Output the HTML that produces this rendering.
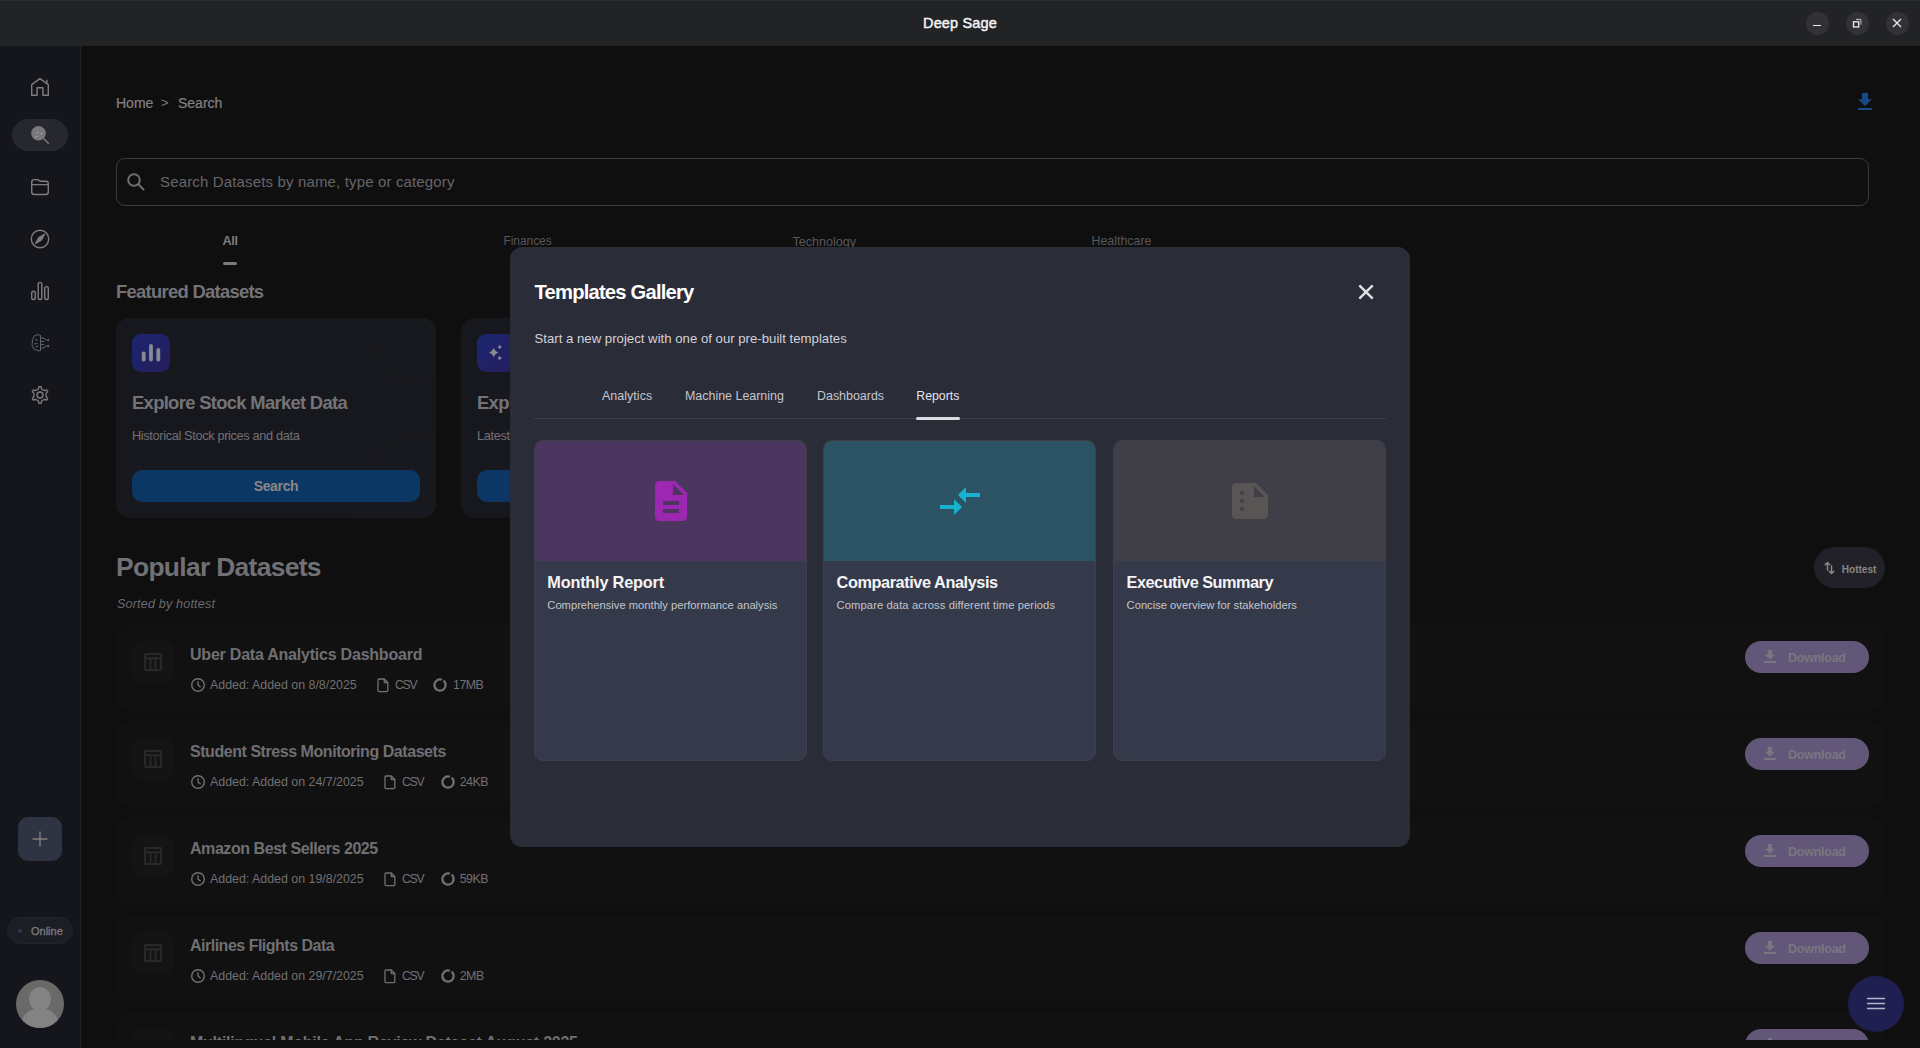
<!DOCTYPE html>
<html><head><meta charset="utf-8">
<style>
*{box-sizing:border-box;margin:0;padding:0}
html,body{width:1920px;height:1048px;overflow:hidden;background:#0f0f10;font-family:"Liberation Sans",sans-serif}
.a{position:absolute}
.t{position:absolute;white-space:nowrap;line-height:1.117}
svg{position:absolute;overflow:visible}
</style></head><body>
<!-- title bar -->
<div class="a" style="left:0;top:0;width:1920px;height:46px;background:#222324"></div>
<div class="a" style="left:0;top:0;width:1920px;height:1px;background:#2c2d38"></div>
<div class="t" style="left:0;width:1920px;text-align:center;top:14.9px;font-size:14.5px;font-weight:400;-webkit-text-stroke:0.45px #f4f4f6;letter-spacing:0.15px;color:#f4f4f6">Deep Sage</div>
<div class="a" style="left:1805.5px;top:11.5px;width:23.5px;height:23.5px;border-radius:50%;background:#313237"></div>
<div class="a" style="left:1845.5px;top:11.5px;width:23.5px;height:23.5px;border-radius:50%;background:#313237"></div>
<div class="a" style="left:1885.5px;top:11.5px;width:23.5px;height:23.5px;border-radius:50%;background:#313237"></div>
<div class="a" style="left:1813px;top:24.8px;width:8.2px;height:1.4px;background:#ececee"></div>
<svg style="left:1851px;top:17px" width="12" height="12" viewBox="0 0 12 12"><rect x="2.5" y="4.8" width="5.2" height="5.2" fill="none" stroke="#ececee" stroke-width="1.3"/><path d="M5 2.4H9.9V7.6" fill="none" stroke="#c8c8cc" stroke-width="1"/></svg>
<svg style="left:1891px;top:17px" width="12" height="12" viewBox="0 0 12 12"><path d="M2 2L10 10M10 2L2 10" stroke="#ececee" stroke-width="1.3"/></svg>

<!-- sidebar -->
<div class="a" style="left:0;top:46px;width:80px;height:1002px;background:#15161b"></div>
<div class="a" style="left:80px;top:46px;width:1px;height:1002px;background:#212322"></div>
<div class="a" style="left:12px;top:119px;width:56px;height:32px;border-radius:16px;background:#27282f"></div>
<div class="a" style="left:25px;top:817px;width:44px;height:44px;border-radius:10px;background:#2f3443;left:18px"></div>
<div class="a" style="left:7px;top:917px;width:66px;height:27px;border-radius:13.5px;background:#1d1e24;border:1px solid #24252b"></div>
<div class="t" style="left:31px;top:925px;font-size:11px;-webkit-text-stroke:0.3px #7d7a7e;color:#7d7a7e">Online</div>
<div class="a" style="left:16px;top:980px;width:48px;height:48px;border-radius:50%;background:#6b6868;overflow:hidden">
 <div class="a" style="left:13px;top:7px;width:22px;height:24px;border-radius:50%;background:#848384"></div>
 <div class="a" style="left:6px;top:28px;width:36px;height:30px;border-radius:50% 50% 0 0;background:#848384"></div>
</div>
<svg style="left:0;top:0" width="80" height="1048" viewBox="0 0 80 1048" fill="none" stroke="#807c7e" stroke-width="1.4" stroke-linejoin="round" stroke-linecap="round">
 <path d="M31.7 95.3V84.6L40 78.6L48.3 84.6V95.3H42.9V87.7H37.1V95.3Z"/>
 <path d="M46.8 80.2V83.3"/>
 <circle cx="38.5" cy="133.3" r="7.3" fill="#7a7a7c" stroke="none"/>
 <path d="M44.2 139L48.3 143.2" stroke="#7a7a7c" stroke-width="1.6"/>
 <circle cx="37.4" cy="132.5" r="0.6" fill="#cfcfcf" stroke="none"/><circle cx="41.4" cy="133.5" r="0.6" fill="#cfcfcf" stroke="none"/><circle cx="36.4" cy="136.5" r="0.6" fill="#cfcfcf" stroke="none"/>
 <path d="M31.7 183.5V182.2Q31.7 179.6 34.3 179.6H37.8L40 181.2H46Q48.3 181.2 48.3 183.4V192Q48.3 194.5 45.8 194.5H34.3Q31.7 194.5 31.7 192Z"/>
 <path d="M31.7 184.6H48.3"/>
 <circle cx="40" cy="239" r="8.7"/>
 <path d="M44.8 234.2L41.4 240.4L35.2 243.8L38.6 237.6Z" fill="#807c7e" stroke-width="1"/>
 <rect x="31.7" y="291.3" width="3.6" height="8.2" rx="1.8"/>
 <rect x="38.2" y="282.4" width="3.6" height="17.1" rx="1.8"/>
 <rect x="44.7" y="286.6" width="3.6" height="12.9" rx="1.8"/>
 <path d="M40 395m-3 0a3 3 0 1 0 6 0a3 3 0 1 0 -6 0"/>
 <path d="M37.05 389.89L38.63 388.54L38.83 386.68L41.17 386.68L41.37 388.54L42.95 389.89L44.90 390.58L46.62 389.83L47.79 391.85L46.28 392.96L45.90 395.00L46.28 397.04L47.79 398.15L46.62 400.17L44.90 399.42L42.95 400.11L41.37 401.46L41.17 403.32L38.83 403.32L38.63 401.46L37.05 400.11L35.10 399.42L33.38 400.17L32.21 398.15L33.72 397.04L34.10 395.00L33.72 392.96L32.21 391.85L33.38 389.83L35.10 390.58Z" stroke-width="1.3"/>
 <g stroke="#5f6170" stroke-width="1">
  <path d="M40.5 335.5V350.5M40.5 335.5Q38 333.8 36 335.2Q33.5 335.5 33.4 338Q31.6 339.5 32.5 342Q31.2 344.5 32.8 346.5Q33 349.5 35.8 350Q38 351.6 40.5 350.5"/>
  <path d="M35.5 339.5L37.5 340.5M34.5 344L37 343.5M36 347L38 346"/>
  <path d="M41 338H44L45.5 340H47M41 341.5H43.8M41 344.5H43.8M41 348H44L45.5 346H47"/><circle cx="48.2" cy="340" r="0.9" fill="#7a7680" stroke="none"/><circle cx="48.2" cy="346" r="0.9" fill="#7a7680" stroke="none"/>
 </g>
 <path d="M40 832V846M33 839H47" stroke="#85807e" stroke-width="1.3"/>
 <circle cx="20" cy="931" r="2" fill="#33365a" stroke="none"/>
</svg>

<!-- main -->
<div id="main"><div class="t" style="left:116px;top:96.3px;font-size:14px;-webkit-text-stroke:0.2px #858286;color:#858286">Home</div>
<div class="t" style="left:161px;top:96.3px;font-size:13px;color:#7a7a86">&gt;</div>
<div class="t" style="left:178px;top:96.3px;font-size:14px;-webkit-text-stroke:0.2px #858286;color:#858286">Search</div>
<svg style="left:1858px;top:93px" width="14" height="17" viewBox="0 0 14 17"><path d="M4 0H10V6.3H14L7 13L0 6.3H4Z" fill="#174a84"/><rect x="0" y="15" width="14" height="2" fill="#174a84"/></svg>
<div class="a" style="left:116px;top:158px;width:1753px;height:48px;border-radius:9px;border:1px solid #3a3a44"></div>
<svg style="left:126px;top:172px" width="20" height="20" viewBox="0 0 20 20" fill="none" stroke="#6f6d70" stroke-width="2"><circle cx="8" cy="8" r="5.8"/><path d="M12.3 12.3L17.5 17.5" stroke-linecap="round"/></svg>
<div class="t" style="left:160px;top:173.6px;font-size:15px;letter-spacing:0.15px;color:#67656a">Search Datasets by name, type or category</div>
<div class="t" style="left:222.4px;top:233.8px;font-size:12.6px;font-weight:700;letter-spacing:-0.3px;color:#7e7d81">All</div>
<div class="a" style="left:222.5px;top:262px;width:14.5px;height:3px;border-radius:1.5px;background:#7b7a7e"></div>
<div class="t" style="left:503.4px;top:234.6px;font-size:11.9px;color:#58575c">Finances</div>
<div class="t" style="left:792.4px;top:234.6px;font-size:12.6px;color:#58575c">Technology</div>
<div class="t" style="left:1091.5px;top:234.6px;font-size:12.4px;color:#58575c">Healthcare</div>
<div class="t" style="left:116px;top:281.6px;font-size:18.4px;font-weight:700;letter-spacing:-0.71px;color:#747377">Featured Datasets</div>
<div class="a" style="left:116px;top:318px;width:320px;height:200px;border-radius:14px;background:#17181d;overflow:hidden"><div class="a" style="left:259px;top:-18px;width:80px;height:80px;border-radius:50%;background:#18191f"></div><div class="a" style="left:235px;top:115px;width:170px;height:170px;border-radius:50%;background:#18191f"></div></div>
<div class="a" style="left:132px;top:334px;width:38px;height:38px;border-radius:9px;background:linear-gradient(135deg,#1b2670,#251d5c)"></div>
<svg style="left:141px;top:343px" width="20" height="20" viewBox="0 0 20 20" fill="#8a8a92"><rect x="0.8" y="8.5" width="3.8" height="10" rx="1.9"/><rect x="8.1" y="1" width="3.8" height="17.5" rx="1.9"/><rect x="15.4" y="5" width="3.8" height="13.5" rx="1.9"/></svg>
<div class="t" style="left:132px;top:392.6px;font-size:18.4px;font-weight:700;letter-spacing:-0.68px;color:#747377">Explore Stock Market Data</div>
<div class="t" style="left:132px;top:428.5px;font-size:12.8px;letter-spacing:-0.37px;color:#727076">Historical Stock prices and data</div>
<div class="a" style="left:132px;top:470px;width:288px;height:32px;border-radius:10px;background:#0c3764"></div>
<div class="t" style="left:132px;width:288px;text-align:center;top:479.3px;font-size:14px;font-weight:700;letter-spacing:-0.35px;color:#8a8786">Search</div>
<div class="a" style="left:461px;top:318px;width:320px;height:200px;border-radius:14px;background:#17181d"></div>
<div class="a" style="left:477px;top:334px;width:38px;height:38px;border-radius:9px;background:linear-gradient(135deg,#1b2670,#251d5c)"></div>
<svg style="left:486px;top:344px" width="20" height="20" viewBox="0 0 20 20" fill="#8a8a92"><path d="M7.7 3.9000000000000004Q8.988 7.212 12.3 8.5Q8.988 9.788 7.7 13.1Q6.412 9.788 3.1000000000000005 8.5Q6.412 7.212 7.7 3.9000000000000004Z"/><path d="M13.7 0.7000000000000002Q14.344 2.356 16.0 3Q14.344 3.644 13.7 5.3Q13.056 3.644 11.399999999999999 3Q13.056 2.356 13.7 0.7000000000000002Z"/><path d="M13.7 11.7Q14.344 13.356 16.0 14Q14.344 14.644 13.7 16.3Q13.056 14.644 11.399999999999999 14Q13.056 13.356 13.7 11.7Z"/></svg>
<div class="t" style="left:477px;top:392.6px;font-size:18.4px;font-weight:700;letter-spacing:-0.68px;color:#747377">Explore Latest News</div>
<div class="t" style="left:477px;top:428.5px;font-size:12.8px;letter-spacing:-0.37px;color:#727076">Latest news articles</div>
<div class="a" style="left:477px;top:470px;width:288px;height:32px;border-radius:10px;background:#0c3764"></div>
<div class="t" style="left:116px;top:553.1px;font-size:26.4px;font-weight:700;letter-spacing:-0.67px;color:#717074">Popular Datasets</div>
<div class="t" style="left:117px;top:596.8px;font-size:12.6px;font-style:italic;letter-spacing:0.17px;color:#6b6a6e">Sorted by hottest</div>
<div class="a" style="left:1814px;top:547px;width:71px;height:41px;border-radius:20.5px;background:#212127"></div>
<svg style="left:1823px;top:560px" width="14" height="16" viewBox="0 0 14 16" fill="none" stroke="#8a878a" stroke-width="1.5" stroke-linecap="round" stroke-linejoin="round"><path d="M4.5 10V2.5M2.2 4.8L4.5 2.5L6.8 4.8M8.5 6V13.5M6.2 11.2L8.5 13.5L10.8 11.2"/></svg>
<div class="t" style="left:1841.7px;top:564px;font-size:10.1px;font-weight:700;color:#8a878a">Hottest</div>
<div class="a" style="left:116px;top:624px;width:1768px;height:86px;border-radius:14px;background:#111111"></div>
<div class="a" style="left:132px;top:641px;width:42px;height:42px;border-radius:10px;background:#141415"></div>
<svg style="left:144px;top:653px" width="18" height="18" viewBox="0 0 18 18" fill="none" stroke="#28292a" stroke-width="1.9"><rect x="1" y="1" width="16" height="16" rx="0.5"/><path d="M1 5.2H17M6.5 5V17M11.5 5V17"/></svg>
<div class="t" style="left:190px;top:645.8px;font-size:16px;font-weight:700;letter-spacing:-0.22px;color:#706f73">Uber Data Analytics Dashboard</div>
<svg style="left:190px;top:677px" width="16" height="16" viewBox="0 0 16 16" fill="none" stroke="#727074" stroke-width="1.4"><circle cx="8" cy="8" r="6.3"/><path d="M8 4.3V8L10.6 10.3"/></svg>
<div class="t" style="left:210px;top:679.3px;font-size:12.4px;color:#727074">Added: Added on 8/8/2025</div>
<div class="a" style="left:116px;top:721px;width:1768px;height:86px;border-radius:14px;background:#111111"></div>
<div class="a" style="left:132px;top:738px;width:42px;height:42px;border-radius:10px;background:#141415"></div>
<svg style="left:144px;top:750px" width="18" height="18" viewBox="0 0 18 18" fill="none" stroke="#28292a" stroke-width="1.9"><rect x="1" y="1" width="16" height="16" rx="0.5"/><path d="M1 5.2H17M6.5 5V17M11.5 5V17"/></svg>
<div class="t" style="left:190px;top:742.8px;font-size:16px;font-weight:700;letter-spacing:-0.45px;color:#706f73">Student Stress Monitoring Datasets</div>
<svg style="left:190px;top:774px" width="16" height="16" viewBox="0 0 16 16" fill="none" stroke="#727074" stroke-width="1.4"><circle cx="8" cy="8" r="6.3"/><path d="M8 4.3V8L10.6 10.3"/></svg>
<div class="t" style="left:210px;top:776.3px;font-size:12.4px;color:#727074">Added: Added on 24/7/2025</div>
<div class="a" style="left:116px;top:818px;width:1768px;height:86px;border-radius:14px;background:#111111"></div>
<div class="a" style="left:132px;top:835px;width:42px;height:42px;border-radius:10px;background:#141415"></div>
<svg style="left:144px;top:847px" width="18" height="18" viewBox="0 0 18 18" fill="none" stroke="#28292a" stroke-width="1.9"><rect x="1" y="1" width="16" height="16" rx="0.5"/><path d="M1 5.2H17M6.5 5V17M11.5 5V17"/></svg>
<div class="t" style="left:190px;top:839.8px;font-size:16px;font-weight:700;letter-spacing:-0.44px;color:#706f73">Amazon Best Sellers 2025</div>
<svg style="left:190px;top:871px" width="16" height="16" viewBox="0 0 16 16" fill="none" stroke="#727074" stroke-width="1.4"><circle cx="8" cy="8" r="6.3"/><path d="M8 4.3V8L10.6 10.3"/></svg>
<div class="t" style="left:210px;top:873.3px;font-size:12.4px;color:#727074">Added: Added on 19/8/2025</div>
<div class="a" style="left:116px;top:915px;width:1768px;height:86px;border-radius:14px;background:#111111"></div>
<div class="a" style="left:132px;top:932px;width:42px;height:42px;border-radius:10px;background:#141415"></div>
<svg style="left:144px;top:944px" width="18" height="18" viewBox="0 0 18 18" fill="none" stroke="#28292a" stroke-width="1.9"><rect x="1" y="1" width="16" height="16" rx="0.5"/><path d="M1 5.2H17M6.5 5V17M11.5 5V17"/></svg>
<div class="t" style="left:190px;top:936.8px;font-size:16px;font-weight:700;letter-spacing:-0.5px;color:#706f73">Airlines Flights Data</div>
<svg style="left:190px;top:968px" width="16" height="16" viewBox="0 0 16 16" fill="none" stroke="#727074" stroke-width="1.4"><circle cx="8" cy="8" r="6.3"/><path d="M8 4.3V8L10.6 10.3"/></svg>
<div class="t" style="left:210px;top:970.3px;font-size:12.4px;color:#727074">Added: Added on 29/7/2025</div>
<div class="a" style="left:116px;top:1012px;width:1768px;height:86px;border-radius:14px;background:#111111"></div>
<div class="a" style="left:132px;top:1029px;width:42px;height:42px;border-radius:10px;background:#141415"></div>
<svg style="left:144px;top:1041px" width="18" height="18" viewBox="0 0 18 18" fill="none" stroke="#28292a" stroke-width="1.9"><rect x="1" y="1" width="16" height="16" rx="0.5"/><path d="M1 5.2H17M6.5 5V17M11.5 5V17"/></svg>
<div class="t" style="left:190px;top:1033.8px;font-size:16px;font-weight:700;letter-spacing:-0.24px;color:#706f73">Multilingual Mobile App Review Dataset August 2025</div>
<svg style="left:190px;top:1065px" width="16" height="16" viewBox="0 0 16 16" fill="none" stroke="#727074" stroke-width="1.4"><circle cx="8" cy="8" r="6.3"/><path d="M8 4.3V8L10.6 10.3"/></svg>
<div class="t" style="left:210px;top:1067.3px;font-size:12.4px;color:#727074">Added: Added on 12/8/2025</div>

<svg style="left:377px;top:678px" width="12" height="15" viewBox="0 0 12 15" fill="none" stroke="#727074" stroke-width="1.3" stroke-linejoin="round"><path d="M1 2Q1 1 2 1H7.3L10.8 4.5V12.6Q10.8 13.6 9.8 13.6H2Q1 13.6 1 12.6Z"/><path d="M7.3 1V4.5H10.8"/></svg>
<div class="t" style="left:395px;top:679.3px;font-size:12.2px;letter-spacing:-1.2px;color:#727074">CSV</div>
<svg style="left:433px;top:678px" width="14" height="14" viewBox="0 0 14 14" fill="none" stroke="#727074" stroke-width="2.2"><path d="M10.6 2.71A5.6 5.6 0 1 1 8.92 1.74"/></svg>
<div class="t" style="left:453px;top:679.3px;font-size:12.4px;letter-spacing:-0.5px;color:#727074">17MB</div>
<div class="a" style="left:1745px;top:641px;width:124px;height:32px;border-radius:16px;background:#625779"></div>
<svg style="left:1764px;top:650px" width="12" height="13" viewBox="0 0 12 13" fill="#7a7680"><path d="M3.8 0H8.2V4.8H11.2L6 9.6L0.8 4.8H3.8Z"/><rect x="0" y="11" width="12" height="2"/></svg>
<div class="t" style="left:1788px;top:651px;font-size:12.6px;font-weight:700;letter-spacing:-0.3px;color:#7a7680">Download</div>
<svg style="left:384px;top:775px" width="12" height="15" viewBox="0 0 12 15" fill="none" stroke="#727074" stroke-width="1.3" stroke-linejoin="round"><path d="M1 2Q1 1 2 1H7.3L10.8 4.5V12.6Q10.8 13.6 9.8 13.6H2Q1 13.6 1 12.6Z"/><path d="M7.3 1V4.5H10.8"/></svg>
<div class="t" style="left:402px;top:776.3px;font-size:12.2px;letter-spacing:-1.2px;color:#727074">CSV</div>
<svg style="left:441px;top:775px" width="14" height="14" viewBox="0 0 14 14" fill="none" stroke="#727074" stroke-width="2.2"><path d="M10.6 2.71A5.6 5.6 0 1 1 8.92 1.74"/></svg>
<div class="t" style="left:459.7px;top:776.3px;font-size:12.4px;letter-spacing:-0.5px;color:#727074">24KB</div>
<div class="a" style="left:1745px;top:738px;width:124px;height:32px;border-radius:16px;background:#625779"></div>
<svg style="left:1764px;top:747px" width="12" height="13" viewBox="0 0 12 13" fill="#7a7680"><path d="M3.8 0H8.2V4.8H11.2L6 9.6L0.8 4.8H3.8Z"/><rect x="0" y="11" width="12" height="2"/></svg>
<div class="t" style="left:1788px;top:748px;font-size:12.6px;font-weight:700;letter-spacing:-0.3px;color:#7a7680">Download</div>
<svg style="left:384px;top:872px" width="12" height="15" viewBox="0 0 12 15" fill="none" stroke="#727074" stroke-width="1.3" stroke-linejoin="round"><path d="M1 2Q1 1 2 1H7.3L10.8 4.5V12.6Q10.8 13.6 9.8 13.6H2Q1 13.6 1 12.6Z"/><path d="M7.3 1V4.5H10.8"/></svg>
<div class="t" style="left:402px;top:873.3px;font-size:12.2px;letter-spacing:-1.2px;color:#727074">CSV</div>
<svg style="left:441px;top:872px" width="14" height="14" viewBox="0 0 14 14" fill="none" stroke="#727074" stroke-width="2.2"><path d="M10.6 2.71A5.6 5.6 0 1 1 8.92 1.74"/></svg>
<div class="t" style="left:459.7px;top:873.3px;font-size:12.4px;letter-spacing:-0.5px;color:#727074">59KB</div>
<div class="a" style="left:1745px;top:835px;width:124px;height:32px;border-radius:16px;background:#625779"></div>
<svg style="left:1764px;top:844px" width="12" height="13" viewBox="0 0 12 13" fill="#7a7680"><path d="M3.8 0H8.2V4.8H11.2L6 9.6L0.8 4.8H3.8Z"/><rect x="0" y="11" width="12" height="2"/></svg>
<div class="t" style="left:1788px;top:845px;font-size:12.6px;font-weight:700;letter-spacing:-0.3px;color:#7a7680">Download</div>
<svg style="left:384px;top:969px" width="12" height="15" viewBox="0 0 12 15" fill="none" stroke="#727074" stroke-width="1.3" stroke-linejoin="round"><path d="M1 2Q1 1 2 1H7.3L10.8 4.5V12.6Q10.8 13.6 9.8 13.6H2Q1 13.6 1 12.6Z"/><path d="M7.3 1V4.5H10.8"/></svg>
<div class="t" style="left:402px;top:970.3px;font-size:12.2px;letter-spacing:-1.2px;color:#727074">CSV</div>
<svg style="left:441px;top:969px" width="14" height="14" viewBox="0 0 14 14" fill="none" stroke="#727074" stroke-width="2.2"><path d="M10.6 2.71A5.6 5.6 0 1 1 8.92 1.74"/></svg>
<div class="t" style="left:459.7px;top:970.3px;font-size:12.4px;letter-spacing:-0.5px;color:#727074">2MB</div>
<div class="a" style="left:1745px;top:932px;width:124px;height:32px;border-radius:16px;background:#625779"></div>
<svg style="left:1764px;top:941px" width="12" height="13" viewBox="0 0 12 13" fill="#7a7680"><path d="M3.8 0H8.2V4.8H11.2L6 9.6L0.8 4.8H3.8Z"/><rect x="0" y="11" width="12" height="2"/></svg>
<div class="t" style="left:1788px;top:942px;font-size:12.6px;font-weight:700;letter-spacing:-0.3px;color:#7a7680">Download</div>
<svg style="left:384px;top:1066px" width="12" height="15" viewBox="0 0 12 15" fill="none" stroke="#727074" stroke-width="1.3" stroke-linejoin="round"><path d="M1 2Q1 1 2 1H7.3L10.8 4.5V12.6Q10.8 13.6 9.8 13.6H2Q1 13.6 1 12.6Z"/><path d="M7.3 1V4.5H10.8"/></svg>
<div class="t" style="left:402px;top:1067.3px;font-size:12.2px;letter-spacing:-1.2px;color:#727074">CSV</div>
<svg style="left:441px;top:1066px" width="14" height="14" viewBox="0 0 14 14" fill="none" stroke="#727074" stroke-width="2.2"><path d="M10.6 2.71A5.6 5.6 0 1 1 8.92 1.74"/></svg>
<div class="t" style="left:459.7px;top:1067.3px;font-size:12.4px;letter-spacing:-0.5px;color:#727074">9MB</div>
<div class="a" style="left:1745px;top:1029px;width:124px;height:32px;border-radius:16px;background:#625779"></div>
<svg style="left:1764px;top:1038px" width="12" height="13" viewBox="0 0 12 13" fill="#7a7680"><path d="M3.8 0H8.2V4.8H11.2L6 9.6L0.8 4.8H3.8Z"/><rect x="0" y="11" width="12" height="2"/></svg>
<div class="t" style="left:1788px;top:1039px;font-size:12.6px;font-weight:700;letter-spacing:-0.3px;color:#7a7680">Download</div>
<div class="a" style="left:1848px;top:976px;width:56px;height:56px;border-radius:50%;background:#1f1f52"></div>
<svg style="left:1866px;top:996px" width="20" height="16" viewBox="0 0 20 16" stroke="#b5b5c5" stroke-width="1.6"><path d="M1 2.5H19M1 7.5H19M1 12.5H19"/></svg>
</div>

<div class="a" style="left:81px;top:1040px;width:1839px;height:8px;background:#0f0f10"></div>
<!-- overlay modal -->
<div id="modal"><div class="a" style="left:510px;top:247px;width:900px;height:600px;border-radius:12px;background:#2a2c38"></div>
<div class="t" style="left:534.5px;top:281.2px;font-size:20.2px;font-weight:700;letter-spacing:-0.79px;color:#ffffff">Templates Gallery</div>
<svg style="left:1358px;top:284.3px" width="16" height="16" viewBox="0 0 16 16"><path d="M1.3 1.3L14.7 14.7M14.7 1.3L1.3 14.7" stroke="#dedee3" stroke-width="2.5"/></svg>
<div class="t" style="left:534.5px;top:332.2px;font-size:13.2px;color:#d2d2d8">Start a new project with one of our pre-built templates</div>
<div class="t" style="left:602px;top:390px;font-size:12.45px;letter-spacing:0.05px;color:#c6c6cd">Analytics</div>
<div class="t" style="left:685px;top:390px;font-size:12.45px;color:#c6c6cd">Machine Learning</div>
<div class="t" style="left:817px;top:390px;font-size:12.45px;color:#c6c6cd">Dashboards</div>
<div class="t" style="left:916.3px;top:390px;font-size:12.3px;color:#e4e4ea">Reports</div>
<div class="a" style="left:534px;top:418px;width:852px;height:1px;background:#3c3e4a"></div>
<div class="a" style="left:916px;top:417px;width:43.5px;height:3px;border-radius:1.5px;background:#dcdce2"></div>
<div class="a" style="left:534px;top:440px;width:272.7px;height:321px;border-radius:9px;background:#353a4a;overflow:hidden;border:1px solid #3e3f48"><div class="a" style="left:0;top:0;width:100%;height:120px;background:#4a365e"></div></div>
<svg style="left:647px;top:477px" width="48" height="48" viewBox="0 0 24 24"><path fill="#9c27b0" d="M14 2H6c-1.1 0-1.99.9-1.99 2L4 20c0 1.1.89 2 1.99 2H18c1.1 0 2-.9 2-2V8l-6-6zm2 16H8v-2h8v2zm0-4H8v-2h8v2zm-3-5V3.5L18.5 9H13z"/></svg>
<div class="t" style="left:547.3px;top:572.7px;font-size:16.3px;font-weight:700;letter-spacing:-0.2px;color:#f4f4f6">Monthly Report</div>
<div class="t" style="left:547.3px;top:598.5px;font-size:11.2px;color:#c4c4cc">Comprehensive monthly performance analysis</div>
<div class="a" style="left:823.3px;top:440px;width:272.7px;height:321px;border-radius:9px;background:#353a4a;overflow:hidden;border:1px solid #3e3f48"><div class="a" style="left:0;top:0;width:100%;height:120px;background:#2b5364"></div></div>
<svg style="left:935.5px;top:476.5px" width="48" height="48" viewBox="0 0 24 24"><path fill="#17b2d2" d="M9.01 14H2v2h7.01v3L13 15l-3.99-4v3zm5.98-1v-3H22V8h-7.01V5L11 9l3.99 4z"/></svg>
<div class="t" style="left:836.5999999999999px;top:572.7px;font-size:16.3px;font-weight:700;letter-spacing:-0.42px;color:#f4f4f6">Comparative Analysis</div>
<div class="t" style="left:836.5999999999999px;top:598.5px;font-size:11.2px;letter-spacing:0.1px;color:#c4c4cc">Compare data across different time periods</div>
<div class="a" style="left:1113.3px;top:440px;width:272.7px;height:321px;border-radius:9px;background:#353a4a;overflow:hidden;border:1px solid #3e3f48"><div class="a" style="left:0;top:0;width:100%;height:120px;background:#403f47"></div></div>
<svg style="left:1225.7px;top:476.7px" width="48" height="48" viewBox="0 0 24 24"><path fill="#5a5555" d="M15 3H5c-1.1 0-1.99.9-1.99 2L3 19c0 1.1.89 2 1.99 2H19c1.1 0 2-.9 2-2V9l-6-6zM8 17c-.55 0-1-.45-1-1s.45-1 1-1 1 .45 1 1-.45 1-1 1zm0-4c-.55 0-1-.45-1-1s.45-1 1-1 1 .45 1 1-.45 1-1 1zm0-4c-.55 0-1-.45-1-1s.45-1 1-1 1 .45 1 1-.45 1-1 1zm6 1V4.5l5.5 5.5H14z"/></svg>
<div class="t" style="left:1126.6px;top:572.7px;font-size:16.3px;font-weight:700;letter-spacing:-0.49px;color:#f4f4f6">Executive Summary</div>
<div class="t" style="left:1126.6px;top:598.5px;font-size:11.2px;color:#c4c4cc">Concise overview for stakeholders</div>
</div>
</body></html>
